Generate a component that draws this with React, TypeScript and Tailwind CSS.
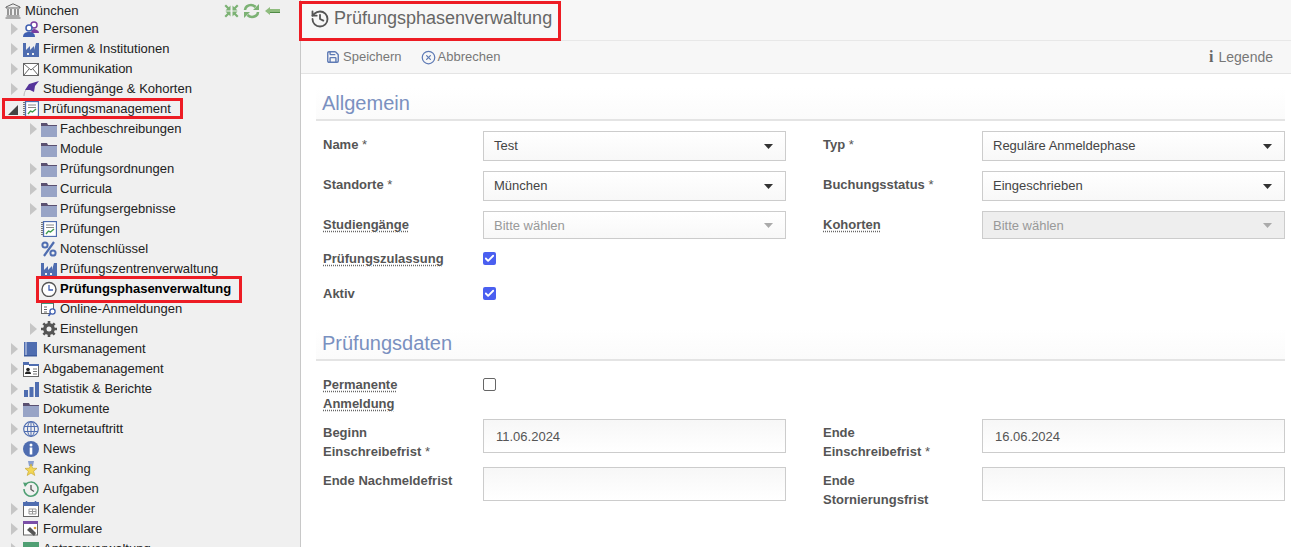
import * as React from 'react'
import { History, Save, CircleX, Check } from 'lucide-react'

const font = "font-['Liberation_Sans',Arial,sans-serif]"

function Folder() {
  return (
    <svg width="16" height="15" viewBox="0 0 16 15">
      <path d="M0 1h6l1 2h9v1H0z" fill="#5a5070" />
      <rect x="0" y="4" width="16" height="11" fill="#98a4c6" />
    </svg>
  )
}
function Factory() {
  return (
    <svg width="16" height="15" viewBox="0 0 16 15">
      <path d="M0 1h3v7l4-4v4l4-4v4l2-7h3v14H0z" fill="#4f6db0" />
      <rect x="4" y="11" width="2" height="2" fill="#f0f0f0" />
      <rect x="9" y="11" width="2" height="2" fill="#f0f0f0" />
    </svg>
  )
}
function Persons() {
  return (
    <svg width="16" height="16" viewBox="0 0 16 16">
      <circle cx="11" cy="4" r="3" fill="#fff" stroke="#7a3fa0" strokeWidth="1.5" />
      <path d="M8 12c0-3 2-4 3-4s5 1 5 4z" fill="#7a3fa0" />
      <circle cx="6" cy="7" r="3" fill="#fff" stroke="#3f5fb0" strokeWidth="1.5" />
      <path d="M0 16c0-4 3-5 6-5s6 1 6 5z" fill="#3f5fb0" />
    </svg>
  )
}
function Mail() {
  return (
    <svg width="16" height="13" viewBox="0 0 16 13" fill="#fff" stroke="#666">
      <rect x="0.5" y="0.5" width="15" height="12" />
      <path d="M1 1l7 6 7-6M1 12l5-6M15 12l-5-6" fill="none" />
    </svg>
  )
}
function Grad() {
  return (
    <svg width="16" height="16" viewBox="0 0 16 16">
      <path d="M1 15c0-3 1-5 2-6" stroke="#bbb" fill="none" />
      <path d="M2 9l4-6 10-3-4 5-1 6-4-2z" fill="#55349a" />
    </svg>
  )
}
function Report() {
  return (
    <svg width="16" height="16" viewBox="0 0 16 16">
      <rect x="2.5" y="0.5" width="13" height="15" fill="#fff" stroke="#4f6db0" strokeWidth="1.300" />
      <path d="M1 1v14" stroke="#777" strokeDasharray="1 1" strokeWidth="2" />
      <path d="M5 4h8M5 6.500h8" stroke="#888" />
      <path d="M5 13l2.500-3 2 1 3.500-3" stroke="#3f9a4f" strokeWidth="1.4" fill="none" />
    </svg>
  )
}
function Percent() {
  return (
    <svg width="16" height="16" viewBox="0 0 16 16" fill="none" stroke="#4f6db0" strokeWidth="2">
      <circle cx="4" cy="4" r="2.6" />
      <circle cx="12" cy="12" r="2.6" />
      <path d="M13 1L3 15" strokeWidth="2.2" />
    </svg>
  )
}
function Clock() {
  return (
    <svg width="16" height="16" viewBox="0 0 16 16" fill="#fff" stroke="#555">
      <circle cx="8" cy="8.5" r="7" strokeWidth="1.4" />
      <path d="M8 4v5h4" fill="none" stroke="#3f5fb0" strokeWidth="1.3" />
    </svg>
  )
}
function OnlineReg() {
  return (
    <svg width="16" height="16" viewBox="0 0 16 16">
      <rect x="0.5" y="0.5" width="12" height="12" fill="#fff" stroke="#666" />
      <rect x="1" y="1" width="11" height="2" fill="#3f9a7f" />
      <path d="M3 6h3M3 8.500h3M3 11h3" stroke="#666" />
      <circle cx="11.500" cy="10.500" r="2.600" fill="#fff" stroke="#3f5fb0" strokeWidth="1.300" />
      <path d="M9.500 12.500L7.500 15" stroke="#3f5fb0" strokeWidth="1.600" />
    </svg>
  )
}
function Gear() {
  return (
    <svg width="16" height="16" viewBox="0 0 16 16">
      <circle cx="8" cy="8" r="4.200" fill="none" stroke="#555" strokeWidth="3.400" />
      <path d="M8 0v16M0 8h16M2.300 2.300l11.400 11.400M13.700 2.300L2.300 13.700" stroke="#555" strokeWidth="2.600" strokeDasharray="3 10 3" />
    </svg>
  )
}
function Book() {
  return (
    <svg width="16" height="16" viewBox="0 0 16 16">
      <path d="M1 1h13v14H1z" fill="#4f6db0" />
      <path d="M3 1v14" stroke="#d7def0" />
      <rect x="1" y="14" width="13" height="1.500" fill="#3c5a9c" />
    </svg>
  )
}
function Badge() {
  return (
    <svg width="16" height="15" viewBox="0 0 16 15">
      <rect x="0.500" y="2.500" width="15" height="12" fill="#fff" stroke="#666" />
      <rect x="0" y="0" width="6" height="3" fill="#4f6db0" />
      <rect x="6" y="2" width="10" height="2" fill="#4f6db0" />
      <circle cx="5" cy="7.500" r="1.800" fill="#222" />
      <path d="M2 12c0-2 1-2.500 3-2.500s3 .5 3 2.500z" fill="#222" />
      <path d="M10 7h4M10 9.500h4M10 12h4" stroke="#777" />
    </svg>
  )
}
function Bars() {
  return (
    <svg width="16" height="16" viewBox="0 0 16 16" fill="#4f6db0">
      <rect x="1" y="9" width="4" height="7" />
      <rect x="6.500" y="6" width="4" height="10" />
      <rect x="12" y="1" width="4" height="15" />
    </svg>
  )
}
function Globe() {
  return (
    <svg width="16" height="16" viewBox="0 0 16 16" fill="none" stroke="#4f6db0">
      <circle cx="8" cy="8" r="7.300" strokeWidth="1.200" />
      <ellipse cx="8" cy="8" rx="3.500" ry="7.300" />
      <path d="M8 1v14M1 5.500h14M1 10.500h14" />
    </svg>
  )
}
function InfoDot() {
  return (
    <svg width="16" height="16" viewBox="0 0 16 16">
      <circle cx="8" cy="8" r="8" fill="#4f6db0" />
      <circle cx="8" cy="4" r="1.500" fill="#fff" />
      <rect x="6.700" y="6.500" width="2.600" height="7" fill="#fff" />
    </svg>
  )
}
function Star() {
  return (
    <svg width="16" height="16" viewBox="0 0 16 16">
      <path d="M5 0h6l-1 5H6z" fill="#8aa0cf" />
      <path d="M8 3l1.600 4.200 4.400.2-3.400 2.800 1.200 4.300L8 12l-3.800 2.500 1.200-4.300L2 7.400l4.400-.2z" fill="#f2d653" stroke="#c9a93a" strokeWidth="0.700" />
    </svg>
  )
}
function Tasks() {
  return (
    <svg width="16" height="16" viewBox="0 0 16 16" fill="none">
      <path d="M2 4.500A7 7 0 1 1 1 8" stroke="#4f9f73" strokeWidth="1.500" />
      <path d="M0 1.500l5 .5-3 4z" fill="#4f9f73" />
      <path d="M8 4v4.500l3 2" stroke="#555" strokeWidth="1.300" />
    </svg>
  )
}
function Calendar() {
  return (
    <svg width="16" height="16" viewBox="0 0 16 16">
      <rect x="0.500" y="1.500" width="15" height="14" fill="#fff" stroke="#666" />
      <rect x="0" y="1" width="16" height="4" fill="#4f6db0" />
      <path d="M3.500 0v3M12.500 0v3" stroke="#4f6db0" strokeWidth="1.500" />
      <path d="M6 8h7v5H6zM9.500 8v5M6 10.500h7" fill="none" stroke="#999" />
    </svg>
  )
}
function Forms() {
  return (
    <svg width="16" height="16" viewBox="0 0 16 16">
      <rect x="0.500" y="1" width="14" height="13" fill="#fff" stroke="#666" />
      <rect x="0" y="0" width="15" height="3" fill="#7b4fa8" />
      <path d="M4 9l3-3 6 6-2 3z" fill="#555" />
      <circle cx="12" cy="7" r="1.300" fill="#d8a23a" />
    </svg>
  )
}
function TableIcon() {
  return (
    <svg width="16" height="14" viewBox="0 0 16 14">
      <rect x="0" y="0" width="16" height="14" fill="#4f9f73" />
      <path d="M1 5h14v8H1z" fill="#fff" />
      <path d="M5.500 5v8M10.500 5v8M1 9h14" stroke="#4f9f73" />
    </svg>
  )
}
function Bank() {
  return (
    <svg width="16" height="16" viewBox="0 0 16 16" fill="none" stroke="#666">
      <path d="M8 .8L15 4v1H1V4z" fill="#eee" />
      <path d="M3 6v6M6 6v6M10 6v6M13 6v6" strokeWidth="1.300" />
      <path d="M1.500 13h13M.5 15h15" />
    </svg>
  )
}

function Arrow({ open }: { open?: boolean }) {
  if (open) {
    return (
      <svg width="10" height="10" viewBox="0 0 10 10" className="-ml-[3px] mt-[2px] shrink-0">
        <path d="M10 0v10H0z" fill="#444" />
      </svg>
    )
  }
  return (
    <svg width="7" height="12" viewBox="0 0 7 12">
      <path d="M0 0l7 6-7 6z" fill="#c6c6c6" />
    </svg>
  )
}

type TreeItem = { label: string; icon: React.ReactNode; depth: 0 | 1; arrow?: boolean; open?: boolean; bold?: boolean }

const tree: TreeItem[] = [
  { label: 'Personen', icon: <Persons />, depth: 0, arrow: true },
  { label: 'Firmen & Institutionen', icon: <Factory />, depth: 0, arrow: true },
  { label: 'Kommunikation', icon: <Mail />, depth: 0, arrow: true },
  { label: 'Studiengänge & Kohorten', icon: <Grad />, depth: 0, arrow: true },
  { label: 'Prüfungsmanagement', icon: <Report />, depth: 0, arrow: true, open: true },
  { label: 'Fachbeschreibungen', icon: <Folder />, depth: 1, arrow: true },
  { label: 'Module', icon: <Folder />, depth: 1 },
  { label: 'Prüfungsordnungen', icon: <Folder />, depth: 1, arrow: true },
  { label: 'Curricula', icon: <Folder />, depth: 1, arrow: true },
  { label: 'Prüfungsergebnisse', icon: <Folder />, depth: 1, arrow: true },
  { label: 'Prüfungen', icon: <Report />, depth: 1 },
  { label: 'Notenschlüssel', icon: <Percent />, depth: 1 },
  { label: 'Prüfungszentrenverwaltung', icon: <Factory />, depth: 1 },
  { label: 'Prüfungsphasenverwaltung', icon: <Clock />, depth: 1, bold: true },
  { label: 'Online-Anmeldungen', icon: <OnlineReg />, depth: 1 },
  { label: 'Einstellungen', icon: <Gear />, depth: 1, arrow: true },
  { label: 'Kursmanagement', icon: <Book />, depth: 0, arrow: true },
  { label: 'Abgabemanagement', icon: <Badge />, depth: 0, arrow: true },
  { label: 'Statistik & Berichte', icon: <Bars />, depth: 0, arrow: true },
  { label: 'Dokumente', icon: <Folder />, depth: 0, arrow: true },
  { label: 'Internetauftritt', icon: <Globe />, depth: 0, arrow: true },
  { label: 'News', icon: <InfoDot />, depth: 0, arrow: true },
  { label: 'Ranking', icon: <Star />, depth: 0 },
  { label: 'Aufgaben', icon: <Tasks />, depth: 0 },
  { label: 'Kalender', icon: <Calendar />, depth: 0, arrow: true },
  { label: 'Formulare', icon: <Forms />, depth: 0, arrow: true },
  { label: 'Antragsverwaltung', icon: <TableIcon />, depth: 0, arrow: true },
]

function TreeRow({ item }: { item: TreeItem }) {
  const nested = item.depth === 1
  return (
    <div className={`flex h-5 shrink-0 items-center ${nested ? 'pl-[30px]' : 'pl-[11px]'}`}>
      <span className={`flex shrink-0 items-center ${nested ? 'w-[11px]' : 'w-[12px]'}`}>{item.arrow && <Arrow open={item.open} />}</span>
      <span className={`flex shrink-0 items-center ${nested ? 'w-[19px]' : 'w-[20px]'}`}>{item.icon}</span>
      <span className={`whitespace-nowrap text-[13px] ${item.bold ? 'font-bold text-black' : 'text-[#222]'}`}>{item.label}</span>
    </div>
  )
}

function Sidebar() {
  return (
    <aside className="flex h-full w-[301px] shrink-0 flex-col overflow-hidden border-r border-[#c8c8c8] bg-[#f0f0f0]">
      <div className="flex h-[19px] shrink-0 items-center pl-[5px] pt-[2px]">
        <span className="flex w-[20px] shrink-0 items-center"><Bank /></span>
        <span className="text-[13px] text-[#222]">München</span>
        <div className="ml-auto mr-[20px] flex items-center gap-[4px]">
          <svg width="15" height="14" viewBox="0 0 15 14" fill="#7cb274">
            <path d="M6.500 6.500H1.500l1.700-1.700L.5 2 2 .5l2.800 2.800L6.500 1.500z" />
            <path d="M8.500 6.500h5l-1.700-1.700L14.500 2 13 .5l-2.800 2.800L8.500 1.500z" />
            <path d="M6.500 7.500h-5l1.700 1.700L.5 12 2 13.500l2.800-2.800 1.700 1.800z" />
            <path d="M8.500 7.500h5l-1.700 1.700 2.700 2.800-1.500 1.500-2.800-2.800-1.700 1.800z" />
          </svg>
          <svg width="17" height="16" viewBox="0 0 17 16" fill="none" stroke="#7cb274" strokeWidth="2.600">
            <path d="M2 7c0-3 3-5 6-5 2 0 3 .5 4.500 2" />
            <path d="M15 9c0 3-3 5-6 5-2 0-3-.5-4.500-2" />
            <path d="M16 1v6h-6z" fill="#7cb274" stroke="none" />
            <path d="M1 15V9h6z" fill="#7cb274" stroke="none" />
          </svg>
          <svg width="15" height="8" viewBox="0 0 15 8" className="ml-[1px]">
            <path d="M0 4l5-4v2h10v4H5v2z" fill="#8fbc7e" />
            <path d="M5 5h10v1H5z" fill="#4f8a45" />
          </svg>
        </div>
      </div>
      {tree.map((item) => (
        <TreeRow key={item.label} item={item} />
      ))}
    </aside>
  )
}

function Label({ children, hint, star, className }: { children: React.ReactNode; hint?: boolean; star?: boolean; className?: string }) {
  return (
    <div className={`whitespace-nowrap text-[13px] font-bold leading-[19px] text-[#555] ${className ?? ''}`}>
      <span className={hint ? 'underline decoration-dotted decoration-[#666] underline-offset-2' : ''}>{children}</span>
      {star && <span className="font-normal"> *</span>}
    </div>
  )
}

function Select({ value, disabled, dim, tall = true }: { value: string; disabled?: boolean; dim?: boolean; tall?: boolean }) {
  const bg = disabled ? 'bg-[#eeeeee]' : 'bg-gradient-to-b from-white to-[#f8f8f8]'
  const color = disabled || dim ? 'text-[#999]' : 'text-[#444]'
  return (
    <div className={`flex w-[303px] items-center justify-between border border-[#ccc] pl-[10px] pr-[12px] text-[13px] ${tall ? 'h-[30px]' : 'h-[28px] pt-[1px]'} ${bg} ${color}`}>
      <span>{value}</span>
      <svg width="9" height="5" viewBox="0 0 9 5">
        <path d="M0 0h9L4.500 5z" fill={disabled || dim ? '#aaa' : '#333'} />
      </svg>
    </div>
  )
}

function TextBox({ value }: { value?: string }) {
  return (
    <div className="flex h-[34px] w-[303px] items-center border border-[#ccc] bg-gradient-to-b from-[#f7f7f7] to-white pl-[12px] pt-[1px] text-[13px] text-[#555]">
      {value}
    </div>
  )
}

function Checkbox({ on }: { on?: boolean }) {
  return on ? (
    <span className="flex h-[13px] w-[13px] items-center justify-center rounded-[2px] bg-[#4a5ff0]">
      <Check size={11} strokeWidth={4} className="text-white" />
    </span>
  ) : (
    <span className="block h-[13px] w-[13px] rounded-[2px] border border-[#666] bg-white" />
  )
}

function Heading({ children, className }: { children: React.ReactNode; className?: string }) {
  return (
    <div className={`mr-[6px] border-b-2 border-[#e4e4e4] bg-gradient-to-b from-white to-[#fbfbfb] pl-[6px] text-[20px] leading-[31px] text-[#7a90c0] ${className ?? ''}`}>
      {children}
    </div>
  )
}

export default function App() {
  return (
    <div className={`relative flex h-[547px] w-[1291px] overflow-hidden bg-white ${font}`}>
      <Sidebar />
      <main className="flex min-w-0 flex-1 flex-col">
        <header className="flex h-[41px] shrink-0 items-center border-b border-[#e8e8e8] bg-[#f7f7f7] pb-[3px] pl-[9px]">
          <History size={20} strokeWidth={2.2} className="mr-[4px] text-[#555]" />
          <h1 className="text-[18px] font-normal text-[#666]">Prüfungsphasenverwaltung</h1>
        </header>
        <div className="flex h-[33px] shrink-0 items-center border-b border-[#e4e4e4] bg-[#f7f7f7] pl-[25px] pr-[18px] text-[13px] text-[#777]">
          <Save size={14} strokeWidth={2.4} className="mr-[3px] text-[#5f7bb5]" />
          <span>Speichern</span>
          <CircleX size={15} className="ml-[19px] mr-[2px] text-[#5f7bb5]" />
          <span>Abbrechen</span>
          <span className="ml-auto mr-[5px] font-['Liberation_Serif',serif] text-[16px] font-bold text-[#666]">i</span>
          <span className="text-[14px]">Legende</span>
        </div>

        <div className="flex flex-col pl-[15px] pt-[14px]">
          <Heading>Allgemein</Heading>

          <div className="mt-[10px] flex items-center pl-[7px]">
            <div className="w-[160px] pb-[3px]"><Label star>Name</Label></div>
            <Select value="Test" />
            <div className="ml-[37px] w-[159px] pb-[3px]"><Label star>Typ</Label></div>
            <Select value="Reguläre Anmeldephase" />
          </div>
          <div className="mt-[10px] flex items-center pl-[7px]">
            <div className="w-[160px] pb-[3px]"><Label star>Standorte</Label></div>
            <Select value="München" />
            <div className="ml-[37px] w-[159px] pb-[3px]"><Label star>Buchungsstatus</Label></div>
            <Select value="Eingeschrieben" />
          </div>
          <div className="mt-[10px] flex items-center pl-[7px]">
            <div className="w-[160px] pb-[2px]"><Label hint>Studiengänge</Label></div>
            <Select value="Bitte wählen" dim tall={false} />
            <div className="ml-[37px] w-[159px] pb-[2px]"><Label hint>Kohorten</Label></div>
            <Select value="Bitte wählen" disabled tall={false} />
          </div>
          <div className="mt-[10px] flex items-center pl-[7px]">
            <div className="w-[160px]"><Label hint>Prüfungszulassung</Label></div>
            <Checkbox on />
          </div>
          <div className="mt-[16px] flex items-center pl-[7px]">
            <div className="w-[160px]"><Label>Aktiv</Label></div>
            <Checkbox on />
          </div>

          <Heading className="mt-[25px]">Prüfungsdaten</Heading>

          <div className="mt-[14px] flex items-start pl-[7px]">
            <div className="w-[160px]"><Label hint>Permanente<br />Anmeldung</Label></div>
            <div className="pt-[3px]"><Checkbox /></div>
          </div>
          <div className="mt-[6px] flex items-start pl-[7px]">
            <div className="w-[160px] pt-[4px]"><Label star>Beginn<br />Einschreibefrist</Label></div>
            <TextBox value="11.06.2024" />
            <div className="ml-[37px] w-[159px] pt-[4px]"><Label star>Ende<br />Einschreibefrist</Label></div>
            <TextBox value="16.06.2024" />
          </div>
          <div className="mt-[6px] flex items-start pl-[7px]">
            <div className="w-[160px] pt-[4px]"><Label>Ende Nachmeldefrist</Label></div>
            <TextBox />
            <div className="ml-[37px] w-[159px] pt-[4px]"><Label>Ende<br />Stornierungsfrist</Label></div>
            <TextBox />
          </div>
        </div>
      </main>

      {/* red annotation boxes from the screenshot */}
      <div className="absolute left-[299px] top-[1px] h-[40px] w-[262px] border-[3px] border-[#ed1c24]" />
      <div className="absolute left-[2px] top-[98px] h-[21px] w-[181px] border-[3px] border-[#ed1c24]" />
      <div className="absolute left-[36px] top-[276px] h-[27px] w-[206px] border-[3px] border-[#ed1c24]" />
    </div>
  )
}
